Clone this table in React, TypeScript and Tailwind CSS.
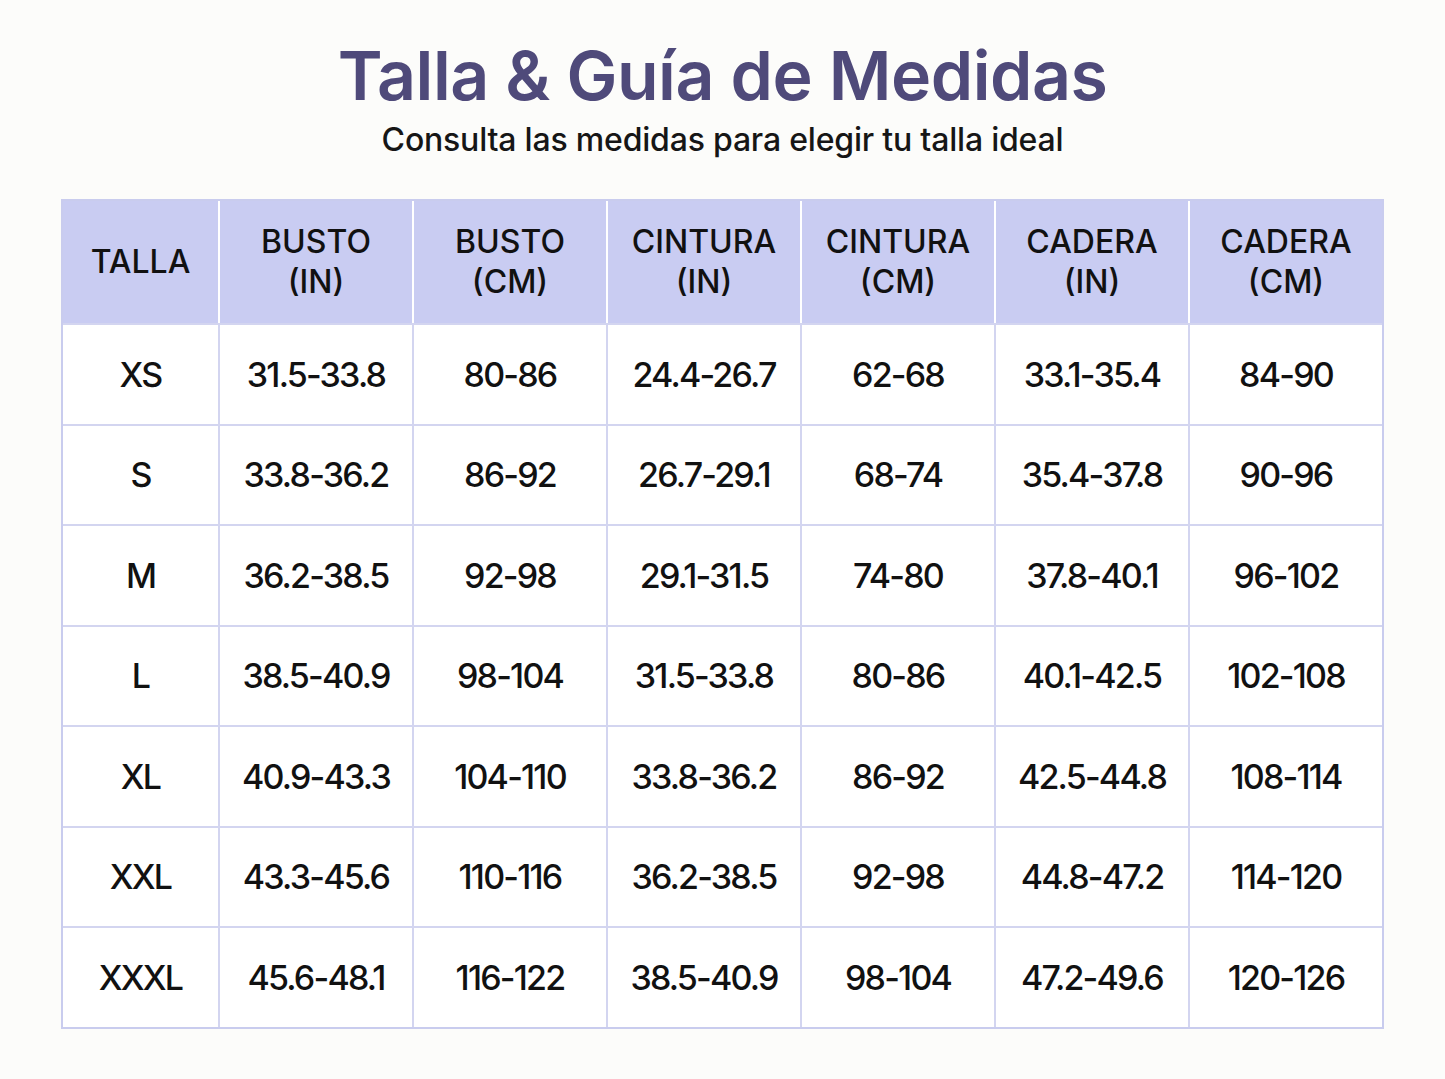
const headers = [
  ["TALLA"],
  ["BUSTO", "(IN)"],
  ["BUSTO", "(CM)"],
  ["CINTURA", "(IN)"],
  ["CINTURA", "(CM)"],
  ["CADERA", "(IN)"],
  ["CADERA", "(CM)"],
];

const rows = [
  ["XS", "31.5-33.8", "80-86", "24.4-26.7", "62-68", "33.1-35.4", "84-90"],
  ["S", "33.8-36.2", "86-92", "26.7-29.1", "68-74", "35.4-37.8", "90-96"],
  ["M", "36.2-38.5", "92-98", "29.1-31.5", "74-80", "37.8-40.1", "96-102"],
  ["L", "38.5-40.9", "98-104", "31.5-33.8", "80-86", "40.1-42.5", "102-108"],
  ["XL", "40.9-43.3", "104-110", "33.8-36.2", "86-92", "42.5-44.8", "108-114"],
  ["XXL", "43.3-45.6", "110-116", "36.2-38.5", "92-98", "44.8-47.2", "114-120"],
  ["XXXL", "45.6-48.1", "116-122", "38.5-40.9", "98-104", "47.2-49.6", "120-126"],
];

const cols = "grid grid-cols-[155px_repeat(6,1fr)]";

export default function App() {
  return (
    <div
      className="w-[1445px] h-[1079px] bg-[#fcfcfa] flex flex-col items-center"
      style={{ fontFamily: "Inter, 'Noto Sans', sans-serif" }}
    >
      <h1 className="mt-[36px] text-[68px] leading-[78px] font-semibold text-[#4f4a7a] tracking-[-0.5px]">
        Talla &amp; Guía de Medidas
      </h1>
      <p className="mt-[6px] text-[32px] leading-[40px] font-medium text-[#161616] tracking-[-0.2px]">
        Consulta las medidas para elegir tu talla ideal
      </p>

      <div className="mt-[39px] w-[1323px] border-2 border-[#c9ccee] bg-white">
        {/* header */}
        <div className={`${cols} h-[122px] bg-[#c9ccf2]`}>
          {headers.map((h, i) => (
            <div
              key={i}
              className={`flex flex-col items-center justify-center text-[32px] leading-[40px] font-medium text-[#111] ${
                i > 0 ? "border-l-2 border-white" : ""
              }`}
            >
              {h.map((line) => (
                <span key={line}>{line}</span>
              ))}
            </div>
          ))}
        </div>

        {/* body */}
        {rows.map((row) => (
          <div
            key={row[0]}
            className={`${cols} h-[100.5px] border-t-2 border-[#d3d5f0]`}
          >
            {row.map((cell, i) => (
              <div
                key={i}
                className={`flex items-center justify-center text-[34px] font-medium text-[#111] tracking-[-1.8px] ${
                  i > 0 ? "border-l-2 border-[#d3d5f0]" : ""
                }`}
              >
                {cell}
              </div>
            ))}
          </div>
        ))}
      </div>
    </div>
  );
}
